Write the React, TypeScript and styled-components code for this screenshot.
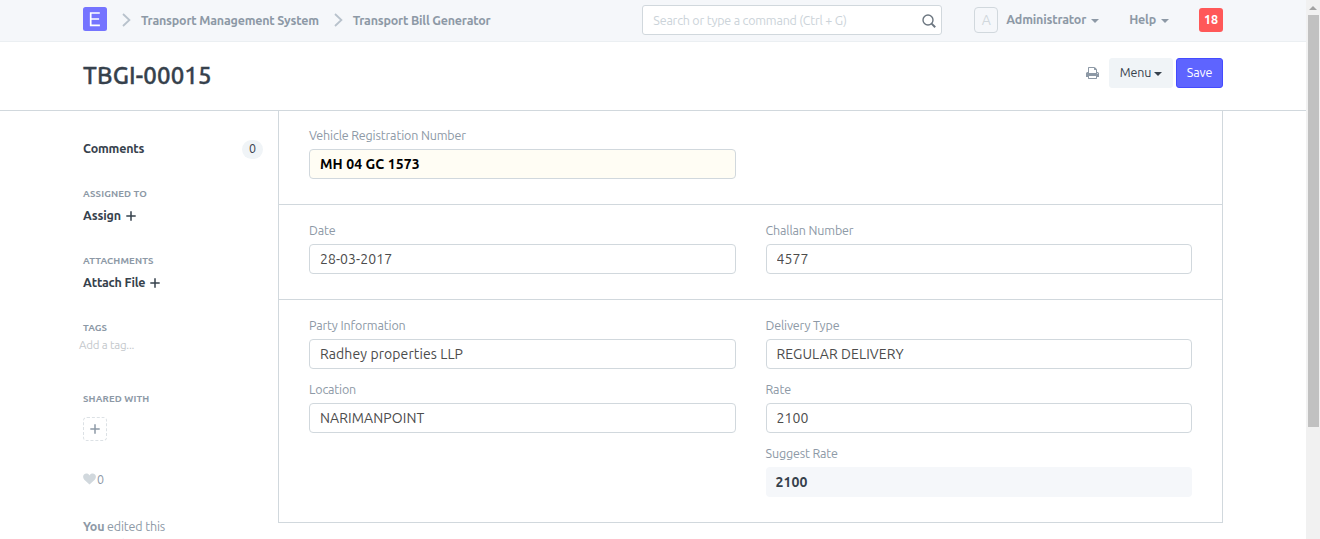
import React from "react";
import styled, { createGlobalStyle, css } from "styled-components";

const GlobalStyle = createGlobalStyle`
  *, *::before, *::after { box-sizing: border-box; }
  body {
    margin: 0;
    overflow: hidden;
    background: #fff;
    color: #36414c;
    font: 12.5px/18px Ubuntu, "Open Sans", "Noto Sans", sans-serif;
    letter-spacing: -0.15px;
  }
  input, button { font: inherit; letter-spacing: inherit; }
  b { letter-spacing: -0.2px; }
`;

const Viewport = styled.div`
  display: flex;
  height: 539px;
  overflow: hidden;
`;

const Page = styled.div`
  flex: 1;
  min-width: 0;
  display: flex;
  flex-direction: column;
`;

const Container = styled.div`
  width: 1140px;
  margin: 0 auto;
  display: flex;
`;

const Navbar = styled.header`
  height: 42px;
  flex: none;
  background: #f5f7fa;
  border-bottom: 1px solid #ebeff2;
  ${Container} { height: 41px; align-items: flex-start; }
`;

const Logo = styled.svg`
  width: 24px;
  height: 24px;
  margin-top: 7px;
`;

const Crumb = styled.a`
  display: flex;
  gap: 10px;
  margin: 11px 0 0 15px;
  color: #8d99a6;
  font-weight: bold;
  letter-spacing: -0.2px;
  svg { margin-top: 2px; }
`;

const SearchBox = styled.div`
  display: flex;
  align-items: center;
  width: 300px;
  height: 30px;
  margin: 5px 32px 0 auto;
  padding: 0 4px 0 10px;
  background: #fff;
  border: 1px solid #d1d8dd;
  border-radius: 3px;
  input {
    flex: 1;
    min-width: 0;
    padding: 0 0 1px;
    border: 0;
    outline: 0;
    letter-spacing: -0.2px;
    &::placeholder { color: #cbd3d9; opacity: 1; }
  }
  svg { margin-top: 2px; }
`;

const Avatar = styled.span`
  width: 24px;
  height: 26px;
  margin: 7px 8px 0 0;
  border: 1px solid #d1d8dd;
  border-radius: 4px;
  color: #d1d8dd;
  text-align: center;
  font-size: 14px;
  line-height: 25px;
`;

const NavItem = styled.a`
  display: flex;
  align-items: center;
  gap: 5px;
  height: 18px;
  margin: 10px 30px 0 0;
  color: #8d99a6;
  font-weight: bold;
  letter-spacing: -0.18px;
`;

const Caret = styled.i`
  border: 4px solid transparent;
  border-top-color: currentColor;
  border-bottom: 0;
  margin-top: 3px;
`;

const Badge = styled.span`
  width: 24px;
  height: 24px;
  margin-top: 8px;
  border-radius: 3px;
  background: #ff5858;
  color: #fff;
  font-weight: bold;
  letter-spacing: 0;
  line-height: 23px;
  text-align: center;
`;

const PageHead = styled.div`
  height: 69px;
  flex: none;
  border-bottom: 1px solid #d1d8dd;
  ${Container} { align-items: flex-start; }
`;

const Title = styled.h1`
  margin: 20px auto 0 0;
  font-size: 24px;
  line-height: 28px;
  font-weight: 500;
  letter-spacing: 0.15px;
  -webkit-text-stroke: 0.35px currentColor;
`;

const Button = styled.button<{ $primary?: boolean }>`
  display: flex;
  align-items: center;
  justify-content: center;
  gap: 3px;
  width: ${(p) => (p.$primary ? 47 : 64)}px;
  height: 30px;
  margin: 16px 0 0 3px;
  padding: 0 0 2px;
  border: 1px solid #f0f4f7;
  border-radius: 3px;
  background: #f0f4f7;
  color: #36414c;
  ${(p) =>
    p.$primary &&
    css`
      background: #5e64ff;
      border-color: #444bff;
      color: #fff;
    `}
`;

const PrintLink = styled.a`
  display: flex;
  margin: 25px 7px 0 0;
`;

const Sidebar = styled.aside`
  width: 195px;
  flex: none;
  padding: 28px 15px 0 0;
  display: flex;
  flex-direction: column;
  color: #8d99a6;
`;

const CommentsRow = styled.div`
  display: flex;
  justify-content: space-between;
  height: 20px;
  margin-bottom: 28px;
  color: #36414c;
`;

const Count = styled.span`
  width: 21px;
  height: 19px;
  margin-top: 1px;
  border-radius: 10px;
  background: #f0f4f7;
  line-height: 17px;
  text-align: center;
`;

const Group = styled.section<{ $height: number }>`
  height: ${(p) => p.$height}px;
`;

const Heading = styled.h6`
  margin: 0 0 5px;
  font-size: 9.6px;
  line-height: 14px;
  font-weight: bold;
  text-transform: uppercase;
  letter-spacing: 0.12px;
`;

const Action = styled.a`
  display: flex;
  align-items: center;
  gap: 5px;
  height: 18px;
  color: #36414c;
  font-weight: bold;
  letter-spacing: -0.15px;
  svg { margin-top: 2px; }
`;

const TagHint = styled.div`
  margin: -4px 0 0 -4px;
  color: #c4c8cc;
  font-size: 11.5px;
  line-height: 17px;
  letter-spacing: -0.2px;
`;

const ShareButton = styled.a`
  display: flex;
  align-items: center;
  justify-content: center;
  width: 24px;
  height: 24px;
  margin-top: 11px;
  border: 1px dashed #dce1e5;
  border-radius: 4px;
`;

const Likes = styled.div`
  display: flex;
  align-items: center;
  gap: 1px;
  height: 18px;
  margin: -1px 0 29px;
`;

const FormBox = styled.main`
  flex: 1;
  height: 412px;
  border: 1px solid #d1d8dd;
  border-top: 0;
`;

const Section = styled.section<{ $top?: number }>`
  display: grid;
  grid-template-columns: 1fr 1fr;
  column-gap: 30px;
  padding: ${(p) => p.$top ?? 16}px 30px 14px;
  & + & { border-top: 1px solid #d1d8dd; }
`;

const Field = styled.label`
  display: block;
  height: 64px;
  color: #8d99a6;
  line-height: 19px;
`;

const fieldBox = css`
  display: block;
  width: 100%;
  height: 30px;
  margin-top: 4px;
  font-size: 14px;
  letter-spacing: 0.09px;
  border-radius: 4px;
`;

const Input = styled.input<{ $required?: boolean }>`
  && {
    ${fieldBox}
    padding: 0 10px 1px;
    border: 1px solid #d1d8dd;
    background: ${(p) => (p.$required ? "#fffdf4" : "#fff")};
    color: ${(p) => (p.$required ? "#000" : "#4c4c4c")};
    font-weight: ${(p) => (p.$required ? "bold" : "normal")};
    outline: 0;
  }
`;

const ReadOnly = styled.div`
  ${fieldBox}
  padding: 0 10px;
  background: #f5f7fa;
  color: #36414c;
  font-weight: bold;
  line-height: 30px;
`;

const Scrollbar = styled.div`
  width: 14px;
  flex: none;
  display: flex;
  flex-direction: column;
  align-items: center;
  background: #f1f1f1;
`;

const ScrollArrow = styled.i`
  margin: 6px 0 5px;
  border: 4px solid transparent;
  border-top: 0;
  border-bottom-color: #a3a3a3;
`;

const Thumb = styled.div`
  width: 11px;
  height: 412px;
  background: #c1c1c1;
`;

const Chevron = () => (
  <svg width="9" height="14" viewBox="0 0 9 14" fill="none" stroke="#b8c2cc" strokeWidth="1.8">
    <path d="M1 1l6.4 6L1 13" />
  </svg>
);

const Plus = () => (
  <svg width="10" height="10" viewBox="0 0 10 10" fill="none" stroke="currentColor" strokeWidth="1.5">
    <path d="M5 .3v9.4M.3 5h9.4" />
  </svg>
);

type FieldProps = { label: string; value: string; required?: boolean };
const TextField = ({ label, value, required }: FieldProps) => (
  <Field>
    {label}
    <Input defaultValue={value} $required={required} />
  </Field>
);

export default function App() {
  return (
    <Viewport>
      <GlobalStyle />
      <Page>
        <Navbar>
          <Container>
            <Logo viewBox="0 0 24 24">
              <rect width="24" height="24" rx="2.5" fill="#7574ff" />
              <path d="M16.8 6H7.7v12.3h9.2M7.7 12h8.4" fill="none" stroke="#fff" strokeWidth="1.7" />
            </Logo>
            <Crumb><Chevron />Transport Management System</Crumb>
            <Crumb><Chevron />Transport Bill Generator</Crumb>
            <SearchBox>
              <input placeholder="Search or type a command (Ctrl + G)" />
              <svg width="16" height="16" viewBox="0 0 16 16" fill="none" stroke="#6c7680">
                <circle cx="7" cy="7" r="5" strokeWidth="1.4" />
                <path d="M10.6 10.6l3.6 3.6" strokeWidth="2" />
              </svg>
            </SearchBox>
            <Avatar>A</Avatar>
            <NavItem>Administrator<Caret /></NavItem>
            <NavItem>Help<Caret /></NavItem>
            <Badge>18</Badge>
          </Container>
        </Navbar>
        <PageHead>
          <Container>
            <Title>TBGI-00015</Title>
            <PrintLink>
              <svg width="13" height="12" viewBox="0 0 1664 1536" fill="#8d99a6">
                <path d="M384 1408h896v-256H384v256zm0-640h896V384h-160q-40 0-68-28t-28-68V128H384v640zm1152 64q0-26-19-45t-45-19-45 19-19 45 19 45 45 19 45-19 19-45zm128 0v416q0 13-9.500 22.500t-22.500 9.500h-224v160q0 40-28 68t-68 28H352q-40 0-68-28t-28-68v-160H32q-13 0-22.500-9.500T0 1248V832q0-79 56.500-135.500T192 640h64V96q0-40 28-68t68-28h672q40 0 88 20t76 48l152 152q28 28 48 76t20 88v256h64q79 0 135.500 56.500T1664 832z" />
              </svg>
            </PrintLink>
            <Button>Menu<Caret /></Button>
            <Button $primary>Save</Button>
          </Container>
        </PageHead>
        <Container>
          <Sidebar>
            <CommentsRow><b>Comments</b><Count>0</Count></CommentsRow>
            <Group $height={67}>
              <Heading>Assigned To</Heading>
              <Action>Assign<Plus /></Action>
            </Group>
            <Group $height={67}>
              <Heading>Attachments</Heading>
              <Action>Attach File<Plus /></Action>
            </Group>
            <Group $height={71}>
              <Heading>Tags</Heading>
              <TagHint>Add a tag...</TagHint>
            </Group>
            <Group $height={79}>
              <Heading>Shared With</Heading>
              <ShareButton><Plus /></ShareButton>
            </Group>
            <Likes>
              <svg width="13" height="12" viewBox="0 0 13 12" fill="#d1d8dd">
                <path d="M6.500 11.500L1.300 6.700C-.2 5.200-.3 2.800 1 1.500 2.500 0 5.300.2 6.500 2.400 7.700.2 10.500 0 12 1.500c1.300 1.300 1.200 3.700-.3 5.200z" />
              </svg>
              0
            </Likes>
            <div><b>You</b> edited this<br />a month ago</div>
          </Sidebar>
          <FormBox>
            <Section $top={15}>
              <TextField label="Vehicle Registration Number" value="MH 04 GC 1573" required />
            </Section>
            <Section>
              <TextField label="Date" value="28-03-2017" />
              <TextField label="Challan Number" value="4577" />
            </Section>
            <Section>
              <div>
                <TextField label="Party Information" value="Radhey properties LLP" />
                <TextField label="Location" value="NARIMANPOINT" />
              </div>
              <div>
                <TextField label="Delivery Type" value="REGULAR DELIVERY" />
                <TextField label="Rate" value="2100" />
                <Field as="div">
                  Suggest Rate
                  <ReadOnly>2100</ReadOnly>
                </Field>
              </div>
            </Section>
          </FormBox>
        </Container>
      </Page>
      <Scrollbar><ScrollArrow /><Thumb /></Scrollbar>
    </Viewport>
  );
}
